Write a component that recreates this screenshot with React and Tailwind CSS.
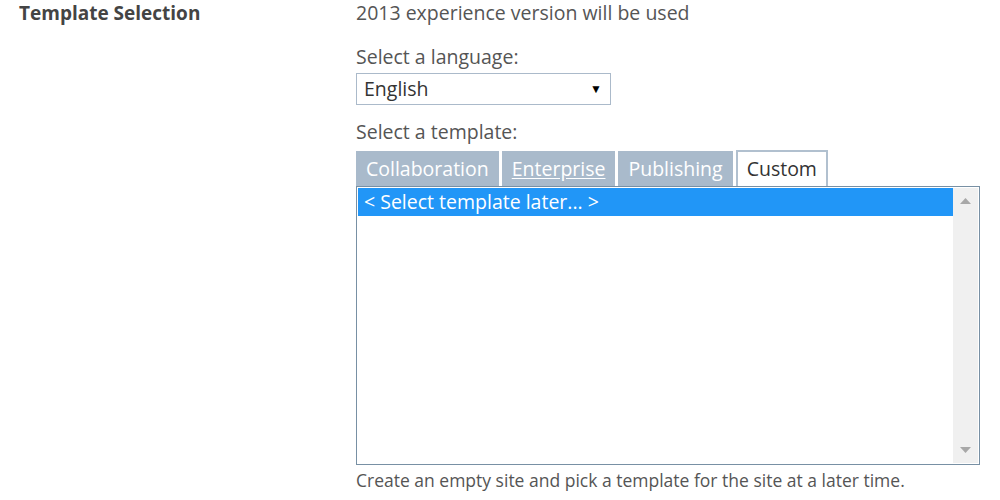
import { useState } from 'react';

const tabs = ['Collaboration', 'Enterprise', 'Publishing', 'Custom'];

const App = () => {
  const [active] = useState('Custom');

  return (
    <div className="w-[1000px] h-[500px] bg-white flex text-[#444] overflow-hidden" style={{ fontFamily: '"Open Sans", "Noto Sans", sans-serif' }}>
      {/* left label column */}
      <div className="w-[356px] pl-[19px]">
        <h3 className="text-[19px] font-bold leading-[26px] text-[#444]">Template Selection</h3>
      </div>

      {/* right column */}
      <div className="flex flex-col w-[624px]">
        <p className="text-[19.5px] leading-[26px] text-[#555]">2013 experience version will be used</p>

        <p className="mt-[19px] text-[19.5px] leading-[24px] text-[#555]">Select a language:</p>
        <div className="mt-[4px] w-[255px] h-[32px] border border-[#abbaca] flex items-center justify-between pl-[7px] pr-[8px]">
          <span className="text-[19.5px] text-[#333]">English</span>
          <span className="text-[12px] text-black">▼</span>
        </div>

        <p className="mt-[15px] text-[19.5px] leading-[24px] text-[#555]">Select a template:</p>

        {/* tabs */}
        <div className="mt-[6px] flex items-end gap-[3px] h-[36px]">
          {tabs.map((t) =>
            t === active ? (
              <div key={t} className="h-[36px] border-2 border-b-0 border-[#b1c0cf] bg-white px-[9px] flex items-center text-[19.5px] text-[#333]">
                {t}
              </div>
            ) : (
              <div
                key={t}
                className={`h-[35px] bg-[#a9bacb] px-[10px] flex items-center text-[19.5px] text-white ${t === 'Enterprise' ? 'underline underline-offset-2' : ''}`}
              >
                {t}
              </div>
            )
          )}
        </div>

        {/* list box */}
        <div className="w-[624px] h-[279px] border border-[#7890a4] flex p-px">
          <div className="flex-1">
            <div className="h-[28px] bg-[#2196f7] text-white text-[19.5px] flex items-center pl-[6px]">
              &lt; Select template later... &gt;
            </div>
          </div>
          <div className="w-[25px] bg-[#f0f0f0] flex flex-col items-center justify-between py-[10px]">
            <svg width="11" height="6" viewBox="0 0 11 6"><path d="M5.5 0 L11 6 L0 6 Z" fill="#a8a8a8" /></svg>
            <svg width="11" height="6" viewBox="0 0 11 6"><path d="M0 0 L11 0 L5.5 6 Z" fill="#a8a8a8" /></svg>
          </div>
        </div>

        <p className="mt-[3px] text-[17.5px] leading-[24px] text-[#555]">Create an empty site and pick a template for the site at a later time.</p>
      </div>
    </div>
  );
};

export default App;
